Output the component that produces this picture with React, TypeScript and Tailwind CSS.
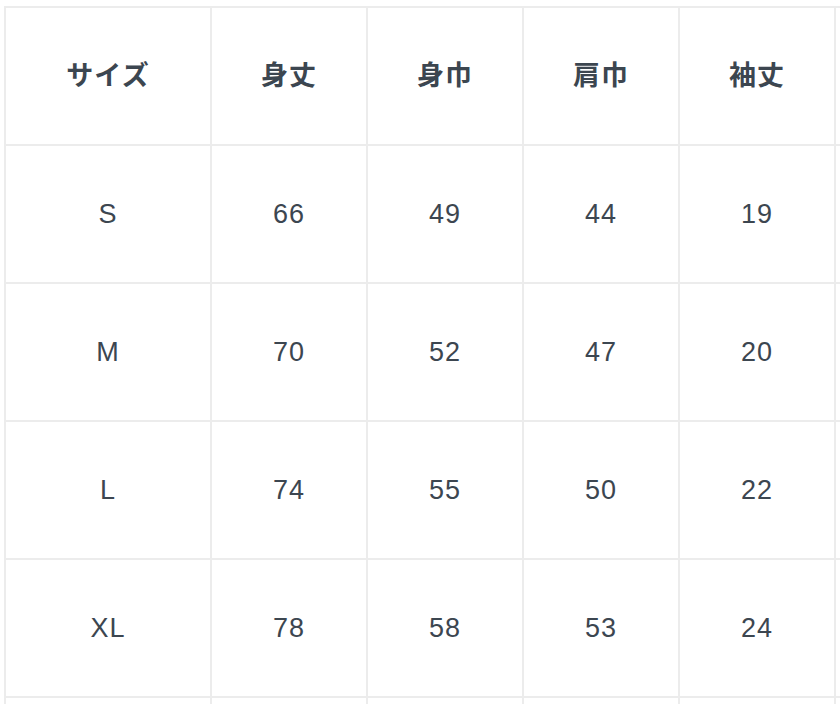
const headers = ['サイズ', '身丈', '身巾', '肩巾', '袖丈', '']

const rows = [
  ['S', '66', '49', '44', '19', ''],
  ['M', '70', '52', '47', '20', ''],
  ['L', '74', '55', '50', '22', ''],
  ['XL', '78', '58', '53', '24', ''],
  ['', '', '', '', '', ''],
]

export default function App() {
  return (
    <div className="min-h-screen w-full overflow-hidden bg-white pl-[4px] pt-[6px]">
      <table
        className="table-fixed border-collapse text-center text-[27px] tracking-[0.04em] text-[#3c4650]"
        style={{ width: 986, fontFamily: '"Liberation Sans", "Noto Sans CJK JP", sans-serif' }}
      >
        <colgroup>
          <col className="w-[206px]" />
          <col className="w-[156px]" />
          <col className="w-[156px]" />
          <col className="w-[156px]" />
          <col className="w-[156px]" />
          <col className="w-[156px]" />
        </colgroup>
        <thead>
          <tr>
            {headers.map((h, i) => (
              <th key={i} className="h-[138px] border-2 border-[#ececec] p-0 font-bold">
                {h}
              </th>
            ))}
          </tr>
        </thead>
        <tbody>
          {rows.map((r, ri) => (
            <tr key={ri}>
              {r.map((v, i) => (
                <td key={i} className="h-[138px] border-2 border-[#ececec] p-0 font-normal">
                  {v}
                </td>
              ))}
            </tr>
          ))}
        </tbody>
      </table>
    </div>
  )
}
